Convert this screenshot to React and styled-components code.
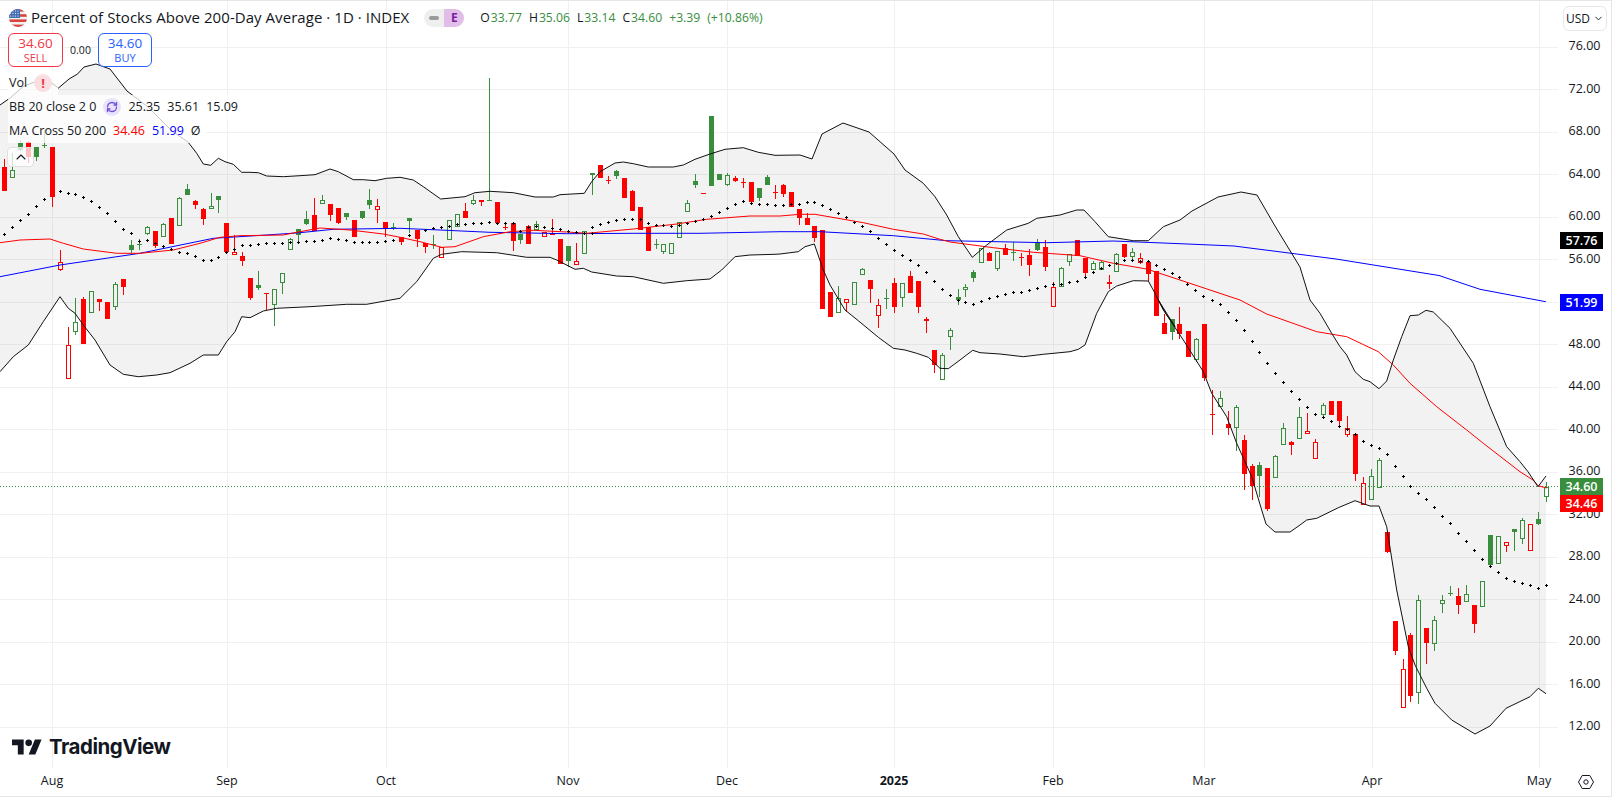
import React from 'react'
import styled, { createGlobalStyle } from 'styled-components'
import { ChevronDown, ChevronUp, RefreshCw } from 'lucide-react'

const UI_FONT = `"Open Sans", "Noto Sans", Roboto, sans-serif`
const GREEN = '#388e3c'
const RED = '#ff0000'
const BLUE = '#0000ff'
const INK = '#131722'
const GRID = '#f0f0f0'

// pixel values were read off crops, so each block carries the crop origin
const crop = (x0, y0, scale = 3) => (rows) =>
  rows.map(([x, ...rest]) => [
    x0 + x / scale,
    ...rest.map((v) => (typeof v === 'number' ? y0 + v / scale : v)),
  ])

// [x, kind, wickTop, bodyTop, bodyBottom, wickBottom]
// G / R filled, g / r hollow
const candles = [
  ...crop(0, 130)([
    [13, 'R', 88, 110, 183, 183], [37, 'g', 70, 120, 140, 140], [61, 'G', 30, 38, 60, 62],
    [85, 'R', 33, 35, 80, 100], [109, 'G', 50, 50, 80, 92], [133, 'G', 0, 45, 47, 55],
    [157, 'R', 52, 52, 200, 230], [181, 'r', 360, 395, 418, 422], [205, 'r', 590, 645, 745, 745],
    [226, 'g', 505, 577, 602, 614], [250, 'R', 500, 507, 641, 641], [274, 'g', 484, 484, 545, 545],
    [298, 'R', 507, 507, 515, 542], [322, 'R', 516, 516, 567, 567], [346, 'g', 456, 463, 527, 540],
    [370, 'R', 447, 447, 471, 495], [394, 'G', 330, 345, 360, 370], [418, 'G', 328, 342, 346, 360],
    [442, 'g', 288, 290, 308, 314], [466, 'R', 303, 303, 347, 355], [490, 'g', 280, 283, 317, 320],
    [514, 'R', 264, 264, 342, 342], [538, 'g', 202, 205, 286, 286], [562, 'G', 162, 178, 194, 194],
    [586, 'R', 211, 213, 225, 236], [610, 'R', 234, 238, 266, 285], [634, 'g', 190, 229, 235, 235],
    [655, 'G', 198, 198, 209, 250], [679, 'R', 279, 279, 365, 370], [703, 'r', 316, 367, 373, 373],
    [727, 'R', 365, 378, 392, 407], [751, 'R', 445, 445, 503, 510], [775, 'G', 423, 465, 473, 480],
    [799, 'R', 490, 490, 492, 541], [823, 'g', 478, 478, 523, 587], [847, 'g', 430, 430, 457, 491],
    [871, 'g', 325, 328, 358, 358], [895, 'G', 297, 298, 314, 337], [919, 'G', 243, 268, 282, 285],
    [943, 'R', 204, 256, 302, 302], [967, 'g', 196, 211, 220, 220], [991, 'R', 223, 223, 254, 272],
    [1015, 'R', 235, 235, 278, 281], [1039, 'G', 250, 250, 261, 269], [1063, 'R', 270, 270, 321, 321],
    [1087, 'G', 244, 244, 263, 268], [1108, 'G', 178, 211, 224, 236], [1132, 'r', 208, 229, 238, 278],
    [1156, 'R', 277, 277, 296, 322], [1180, 'G', 278, 290, 292, 300],
  ]),
  ...crop(400, 70)([
    [4, 'R', 500, 500, 516, 525], [28, 'G', 445, 445, 452, 490], [52, 'R', 480, 480, 507, 530],
    [76, 'R', 520, 520, 530, 548], [100, 'G', 496, 523, 525, 536], [124, 'r', 530, 530, 560, 560],
    [148, 'g', 451, 451, 508, 508], [172, 'g', 433, 433, 468, 468], [196, 'R', 400, 423, 443, 443],
    [220, 'g', 375, 390, 400, 404], [244, 'R', 391, 391, 395, 408], [268, 'G', 25, 390, 392, 392],
    [292, 'R', 396, 396, 459, 459], [316, 'R', 460, 470, 473, 480], [340, 'R', 458, 460, 513, 543],
    [361, 'G', 492, 492, 510, 522], [385, 'R', 466, 468, 522, 522], [409, 'g', 452, 461, 476, 476],
    [433, 'r', 487, 487, 499, 499], [457, 'R', 447, 490, 494, 494], [481, 'R', 507, 507, 581, 581],
    [505, 'G', 528, 528, 573, 590], [529, 'r', 519, 574, 581, 581], [553, 'g', 482, 484, 548, 548],
    [577, 'G', 310, 310, 314, 375], [601, 'R', 285, 285, 324, 324], [625, 'R', 318, 329, 332, 343],
    [649, 'G', 300, 303, 318, 327], [673, 'R', 324, 324, 383, 383], [697, 'R', 361, 363, 422, 422],
    [721, 'R', 411, 411, 480, 480], [745, 'R', 472, 472, 543, 543], [769, 'G', 507, 523, 526, 537],
    [790, 'g', 523, 523, 544, 552], [814, 'g', 520, 520, 548, 548], [838, 'g', 457, 457, 500, 500],
    [862, 'g', 391, 400, 422, 422], [886, 'G', 312, 333, 345, 353], [910, 'R', 369, 369, 371, 371],
    [934, 'G', 138, 138, 347, 347], [958, 'G', 312, 312, 330, 330], [982, 'g', 310, 316, 341, 347],
    [1006, 'R', 318, 323, 333, 335], [1030, 'R', 325, 335, 338, 353], [1054, 'R', 336, 336, 395, 395],
    [1078, 'G', 354, 354, 384, 393], [1102, 'G', 315, 321, 345, 345], [1126, 'R', 346, 366, 369, 386],
    [1150, 'R', 343, 345, 372, 380], [1174, 'R', 366, 366, 410, 410], [1198, 'R', 418, 418, 443, 465],
  ]),
  ...crop(780, 170)([
    [82, 'R', 130, 145, 165, 165], [103, 'R', 168, 168, 203, 215], [127, 'R', 180, 180, 417, 417],
    [151, 'R', 366, 366, 441, 441], [175, 'g', 348, 384, 425, 425], [199, 'r', 388, 388, 395, 425],
    [223, 'g', 337, 337, 401, 401], [247, 'g', 295, 298, 311, 314], [271, 'R', 330, 330, 357, 398],
    [295, 'r', 387, 406, 434, 473], [319, 'G', 357, 384, 387, 417], [343, 'R', 324, 339, 411, 429],
    [367, 'g', 340, 340, 380, 410], [391, 'R', 303, 318, 369, 369], [415, 'R', 333, 333, 411, 429],
    [439, 'R', 441, 448, 452, 489], [463, 'R', 541, 541, 586, 608], [487, 'g', 550, 556, 628, 628],
    [511, 'g', 475, 481, 499, 540], [535, 'G', 358, 381, 389, 404], [556, 'g', 342, 352, 358, 381],
    [580, 'G', 300, 306, 324, 336], [604, 'g', 235, 235, 275, 275], [628, 'R', 247, 250, 273, 273],
    [652, 'g', 244, 244, 293, 303], [676, 'R', 222, 235, 254, 254], [700, 'G', 216, 245, 248, 272],
    [724, 'R', 250, 260, 262, 288], [748, 'R', 238, 256, 285, 318], [772, 'G', 208, 220, 240, 242],
    [796, 'R', 210, 231, 291, 303], [820, 'r', 335, 352, 409, 409], [844, 'g', 292, 295, 347, 347],
    [868, 'g', 253, 253, 272, 288], [892, 'R', 210, 210, 258, 258], [916, 'R', 263, 263, 308, 325],
    [940, 'g', 274, 280, 296, 298], [964, 'g', 272, 277, 296, 300], [988, 'R', 316, 337, 341, 357],
    [1009, 'g', 250, 253, 302, 302], [1033, 'R', 222, 222, 261, 265], [1057, 'g', 235, 245, 257, 266],
    [1081, 'r', 250, 265, 275, 283], [1105, 'R', 276, 276, 311, 334], [1129, 'R', 304, 304, 437, 437],
    [1153, 'R', 432, 460, 491, 491], [1177, 'G', 448, 448, 485, 510], [1198, 'R', 412, 463, 491, 506],
  ]),
  ...crop(1150, 300)([
    [115, 'R', 93, 93, 170, 170], [139, 'g', 114, 118, 176, 185], [163, 'R', 72, 72, 233, 242],
    [187, 'R', 270, 342, 344, 404], [211, 'g', 273, 295, 317, 322], [235, 'R', 334, 373, 384, 404],
    [259, 'g', 315, 322, 382, 452], [283, 'R', 405, 421, 521, 570], [307, 'R', 492, 498, 557, 600],
    [328, 'G', 487, 496, 527, 590], [352, 'R', 505, 505, 628, 632], [376, 'g', 465, 469, 532, 532],
    [400, 'g', 369, 385, 431, 435], [424, 'R', 424, 427, 434, 465], [448, 'g', 321, 352, 415, 415],
    [472, 'r', 339, 394, 400, 400], [496, 'r', 418, 427, 475, 475], [520, 'g', 310, 316, 343, 350],
    [544, 'R', 303, 303, 344, 344], [568, 'R', 303, 303, 362, 377], [592, 'r', 349, 385, 403, 410],
    [616, 'R', 403, 403, 521, 542], [640, 'r', 531, 550, 613, 613], [664, 'g', 508, 529, 596, 596],
    [688, 'g', 475, 481, 562, 565],
  ]),
  ...crop(1300, 490)([
    [262, 'R', 126, 126, 185, 188], [286, 'R', 393, 393, 482, 495], [310, 'r', 508, 538, 650, 650],
    [331, 'R', 430, 435, 617, 635], [355, 'g', 315, 331, 607, 643], [379, 'R', 414, 414, 458, 521],
    [403, 'g', 378, 391, 458, 482], [427, 'g', 315, 331, 340, 368], [451, 'G', 288, 309, 312, 318],
    [475, 'R', 294, 319, 344, 371], [499, 'g', 285, 313, 334, 334], [523, 'R', 345, 345, 401, 428],
    [547, 'g', 274, 274, 347, 347], [571, 'G', 135, 135, 224, 234], [595, 'g', 139, 139, 220, 220],
    [619, 'r', 157, 157, 166, 185], [643, 'G', 118, 118, 125, 182],
  ]),
  ...crop(1490, 500)([
    [97, 'g', 54, 61, 115, 131], [121, 'r', 73, 73, 151, 151], [145, 'G', 36, 58, 71, 75],
  ]),
  ...crop(1400, 420)([[439, 'g', 187, 201, 227, 245]]),
]

const basis = [
  ...crop(0, 130)([
    [13, 313], [37, 292], [61, 271], [85, 253], [109, 229], [133, 208], [181, 184], [205, 189], [226, 193],
    [250, 203], [274, 214], [298, 232], [322, 250], [346, 274], [370, 298], [394, 310], [418, 334], [442, 331],
    [466, 340], [490, 349], [514, 358], [538, 367], [562, 371], [586, 379], [610, 391], [634, 391], [655, 382],
    [679, 367], [703, 358], [727, 347], [751, 346], [775, 343], [799, 341], [823, 340], [847, 340], [871, 337],
    [895, 338], [919, 334], [943, 334], [967, 331], [991, 325], [1015, 329], [1039, 332], [1063, 337], [1087, 337],
    [1108, 337], [1132, 337], [1156, 334], [1180, 331],
  ]),
  ...crop(400, 70)([
    [28, 496], [76, 481], [100, 475], [124, 472], [148, 469], [172, 463], [196, 463], [220, 460], [244, 460],
    [268, 457], [292, 460], [316, 460], [340, 460], [361, 484], [385, 472], [409, 469], [433, 472], [457, 475],
    [481, 478], [505, 484], [529, 487], [553, 491], [577, 490], [577, 472], [601, 463], [625, 457], [649, 451],
    [673, 448], [697, 448], [721, 448], [745, 460], [769, 466], [790, 466], [814, 469], [838, 466], [862, 460],
    [886, 454], [910, 448], [934, 439], [958, 427], [982, 415], [1006, 403], [1030, 394], [1054, 400], [1078, 403],
    [1102, 403], [1126, 406], [1150, 406], [1174, 403],
  ]),
  ...crop(780, 170)([
    [58, 103], [82, 97], [103, 97], [127, 106], [151, 118], [175, 130], [199, 142], [223, 157], [247, 169],
    [271, 184], [295, 205], [319, 223], [343, 241], [367, 256], [391, 271], [415, 286], [439, 307], [463, 334],
    [487, 358], [511, 376], [535, 391], [556, 397], [580, 403], [604, 394], [628, 385], [652, 379], [676, 373],
    [700, 367], [724, 367], [748, 361], [772, 355], [796, 349], [820, 343], [844, 343], [868, 337], [892, 334],
    [916, 322], [940, 307], [964, 295], [988, 286], [1009, 280], [1033, 271], [1057, 271], [1081, 273], [1105, 274],
    [1129, 286], [1153, 298], [1177, 310], [1198, 322],
  ]),
  [1187.3, 284], [1195.3, 290], [1203.3, 296], [1212.3, 300],
  ...crop(1150, 300)([
    [211, 13], [235, 37], [259, 61], [283, 91], [307, 124], [328, 157], [352, 190], [376, 220], [400, 247],
    [424, 274], [448, 298], [472, 322], [496, 343], [520, 352], [544, 364], [568, 379], [592, 388], [616, 403],
    [640, 424], [664, 436], [688, 445], [712, 463], [736, 499], [760, 529], [781, 559],
  ]),
  ...crop(1300, 490)([
    [355, 10], [379, 28], [403, 52], [427, 79], [451, 100], [475, 130], [499, 154], [523, 181], [547, 208],
    [571, 229], [595, 247], [619, 265], [643, 274],
  ]),
  ...crop(1490, 500)([[97, 250], [121, 257], [145, 265], [169, 257]]),
]

const upperBand = [
  [0, 105], [10, 98], [24, 86], [45, 78], [58.5, 88], [69, 79], [77.5, 74], [84, 67], [96, 64], [110, 69],
  [127, 91], [148, 107], [172, 131], [188, 142],
  ...crop(0, 130)([
    [590, 70], [610, 102], [632, 106], [655, 85], [675, 95], [700, 103], [725, 127], [750, 127], [775, 128],
    [800, 138], [850, 140], [900, 137], [945, 134], [990, 117], [1015, 125], [1060, 149], [1090, 149], [1125, 152],
    [1160, 145],
  ]),
  ...crop(400, 70)([
    [0, 322], [40, 330], [70, 350], [122, 387], [195, 380], [225, 368], [270, 364], [340, 368], [405, 381],
    [460, 381], [480, 374], [553, 370], [575, 335], [600, 305], [645, 279], [670, 276], [700, 281], [745, 291],
    [820, 291], [850, 285], [885, 268], [930, 252], [975, 238], [1030, 233], [1075, 247], [1125, 256], [1200, 255],
  ]),
  [812, 159], [822, 134], [843, 123], [869, 132], [894, 154], [905, 170],
  ...crop(780, 170)([
    [430, 40], [465, 80], [500, 135], [535, 200], [577, 262], [620, 225], [680, 180], [745, 160], [770, 145],
    [840, 135], [890, 120], [912, 120], [945, 155], [985, 200], [1060, 212], [1105, 212], [1150, 170], [1200, 150],
  ]),
  [1192, 211], [1218, 197], [1241, 192], [1257, 195], [1275, 226], [1300, 267],
  ...crop(1150, 300)([
    [480, 0], [510, 40], [545, 100], [570, 140], [590, 165], [615, 215], [640, 238], [660, 245], [687, 266],
    [710, 243], [730, 180], [755, 110], [780, 47], [805, 45], [828, 31], [850, 36], [900, 85], [970, 190],
    [1020, 320], [1070, 440], [1110, 485],
  ]),
  [1528, 471.7], [1538, 486.7], [1546, 476],
]

const lowerBand = [
  ...crop(0, 130)([
    [0, 725], [40, 680], [85, 645], [130, 575], [180, 500], [205, 535], [225, 550], [250, 585], [285, 630],
    [330, 705], [370, 733], [415, 740], [470, 735], [510, 728], [570, 700], [610, 675], [655, 675], [680, 635],
    [705, 605], [725, 560], [750, 563], [790, 543], [830, 535], [930, 530], [1040, 523], [1100, 523],
  ]),
  ...crop(400, 70)([
    [0, 685], [50, 635], [100, 565], [125, 553], [185, 545], [290, 548], [380, 562], [450, 562], [470, 570],
    [525, 598], [550, 595], [575, 606], [650, 618], [700, 620], [790, 640], [860, 632], [930, 627], [965, 600],
    [1005, 560], [1050, 555], [1125, 553],
  ]),
  ...crop(780, 170)([
    [0, 252], [55, 245], [75, 230], [103, 222], [130, 300], [150, 345], [195, 420], [235, 452], [295, 502],
    [340, 535], [375, 540], [410, 550], [445, 562], [480, 595], [505, 596], [540, 570], [578, 541], [600, 548],
    [660, 552], [730, 560], [790, 553], [870, 545], [895, 538], [915, 525], [950, 430], [985, 365], [1010, 348],
    [1060, 332], [1105, 333], [1125, 370], [1150, 420], [1185, 470],
  ]),
  ...crop(1150, 300)([[25, 0], [50, 45], [100, 120], [160, 215], [185, 280], [230, 350], [260, 430], [305, 530], [335, 630]]),
  [1266, 524], [1275, 532], [1290, 532],
  ...crop(1300, 490)([
    [0, 105], [20, 90], [50, 85], [115, 53], [165, 32], [210, 48], [237, 48], [260, 110], [290, 300], [325, 470],
    [345, 525], [380, 595], [405, 640], [455, 690],
  ]),
  [1475, 734], [1490, 726],
  ...crop(1490, 500)([[48, 625], [120, 590], [145, 565], [168, 581]]),
]

const ma50 = [
  ...crop(0, 130)([
    [0, 338], [60, 330], [150, 327], [190, 340], [250, 357], [350, 370], [420, 370], [520, 360], [600, 340],
    [660, 322], [720, 317], [850, 315], [900, 305], [960, 294], [1050, 300], [1150, 312],
  ]),
  ...crop(400, 70)([
    [0, 502], [60, 515], [125, 532], [165, 530], [250, 500], [330, 485], [400, 481], [500, 486], [560, 490],
    [700, 477], [830, 462], [920, 448], [1050, 438],
  ]),
  ...crop(780, 170)([
    [0, 138], [60, 133], [105, 133], [250, 158], [340, 178], [430, 192], [480, 208], [510, 216], [640, 233],
    [760, 247], [900, 257], [1000, 280], [1100, 297], [1200, 330],
  ]),
  ...crop(1150, 300)([
    [270, 0], [350, 42], [500, 95], [590, 110], [685, 155], [730, 195], [780, 250], [860, 320], [950, 390],
    [1000, 430], [1110, 515],
  ]),
  [1533, 480], [1538, 485.7], [1546.7, 488],
]

const ma200 = [
  ...crop(0, 130)([[0, 440], [180, 405], [420, 370], [640, 325], [800, 315], [900, 308], [1000, 298]]),
  ...crop(400, 70)([[0, 475], [120, 480], [270, 487], [500, 491], [700, 490], [900, 490]]),
  ...crop(780, 170)([[0, 185], [120, 185], [340, 197], [500, 212], [800, 218], [1000, 213], [1200, 221]]),
  [1234, 246], [1336, 259], [1439, 275.5],
  ...crop(1480, 225)([[0, 193], [197, 230]]),
  [1546, 302],
]

const priceTicks = [76, 72, 68, 64, 60, 56, 52, 48, 44, 40, 36, 32, 28, 24, 20, 16, 12]
const priceY = (p) => 46.7 + (76 - p) * 10.625
const monthLines = [52, 227, 386, 568, 727, 894, 1053, 1204, 1372, 1539]
const timeTicks = [
  { x: 52, label: 'Aug' },
  { x: 227, label: 'Sep' },
  { x: 386, label: 'Oct' },
  { x: 568, label: 'Nov' },
  { x: 727, label: 'Dec' },
  { x: 894, label: '2025', bold: true },
  { x: 1053, label: 'Feb' },
  { x: 1204, label: 'Mar' },
  { x: 1372, label: 'Apr' },
  { x: 1539, label: 'May' },
]
const priceTags = [
  { y: 232.3, label: '57.76', bg: '#000000' },
  { y: 294, label: '51.99', bg: BLUE },
  { y: 477.7, label: '34.60', bg: GREEN },
  { y: 495, label: '34.46', bg: RED },
]

const points = (rows) => rows.map(([x, y]) => `${x.toFixed(1)},${y.toFixed(1)}`).join(' ')

const GlobalStyle = createGlobalStyle`
  html, body, #root {
    margin: 0;
    padding: 0;
    height: 100%;
    background: #ffffff;
  }
  body {
    font-family: ${UI_FONT};
    color: ${INK};
    overflow: hidden;
  }
`

const Page = styled('div')`
  width: 1612px;
  height: 797px;
  display: flex;
  flex-direction: column;
  box-sizing: border-box;
  border-top: 1px solid #e6e6e6;
  border-right: 1px solid #e6e6e6;
  border-bottom: 1px solid #e6e6e6;
`
const ChartRow = styled('div')`
  display: flex;
  height: 767px;
`
const Pane = styled('div')`
  position: relative;
  width: 1558px;
  height: 767px;
  overflow: hidden;
`
const ChartSvg = styled('svg')`
  display: block;
`
const LegendOverlay = styled('div')`
  position: absolute;
  top: 7px;
  left: 8px;
  display: flex;
  flex-direction: column;
  align-items: flex-start;
`
const TitleRow = styled('div')`
  display: flex;
  align-items: center;
  height: 19px;
  margin-left: 1px;
`
const FlagMark = styled('svg')`
  flex: none;
  margin-right: 4px;
`
const Title = styled('span')`
  font-size: 15px;
  letter-spacing: 0.05px;
  white-space: nowrap;
  line-height: 19px;
`
const StatusPill = styled('div')`
  display: flex;
  align-items: center;
  width: 40px;
  height: 18px;
  margin-left: 15px;
  border-radius: 9px;
  overflow: hidden;
  background: #efefef;
`
const PillDash = styled('span')`
  flex: 1;
  display: flex;
  justify-content: center;
  &::before {
    content: '';
    width: 10px;
    height: 4px;
    border-radius: 2px;
    background: #9b9b9b;
  }
`
const PillEarnings = styled('span')`
  width: 20px;
  height: 18px;
  text-align: center;
  font-size: 12px;
  font-weight: 700;
  line-height: 18px;
  color: #7b1fa2;
  background: #e1bee7;
`
const Ohlc = styled('div')`
  display: flex;
  gap: 7px;
  margin-left: 16px;
  font-size: 12.2px;
  line-height: 19px;
  white-space: nowrap;
`
const OhlcItem = styled('span')`
  color: ${GREEN};
  & > b {
    font-weight: 400;
    color: ${INK};
    margin-right: 1px;
  }
`
const TradeRow = styled('div')`
  display: flex;
  align-items: center;
  margin-top: 6px;
`
const TradeButton = styled('div')`
  box-sizing: border-box;
  width: ${(p) => p.$w}px;
  height: 34px;
  display: flex;
  flex-direction: column;
  align-items: center;
  justify-content: center;
  border: 1px solid ${(p) => p.$color};
  border-radius: 6px;
  background: #ffffff;
  color: ${(p) => p.$color};
  font-size: 13.5px;
  line-height: 15px;
  & > small {
    font-size: 11px;
    line-height: 14px;
  }
`
const Spread = styled('span')`
  width: 35px;
  text-align: center;
  font-size: 10.5px;
`
const StudyRow = styled('div')`
  display: flex;
  align-items: center;
  gap: 7px;
  height: 24px;
  padding-left: 1px;
  padding-right: 6px;
  font-size: 12.5px;
  line-height: 24px;
  white-space: nowrap;
  background: rgba(255, 255, 255, 0.75);
`
const VolRow = styled(StudyRow)`
  margin-top: 4px;
`
const StudyValues = styled('span')`
  display: flex;
  gap: 7px;
`
const StudyValue = styled('span')`
  color: ${(p) => p.$color || INK};
`
const Badge = styled('span')`
  width: 18px;
  height: 18px;
  border-radius: 50%;
  display: flex;
  align-items: center;
  justify-content: center;
  background: ${(p) => p.$bg};
  color: ${(p) => p.$color};
  font-size: 13px;
  font-weight: 700;
`
const CollapseButton = styled('div')`
  box-sizing: border-box;
  width: 27px;
  height: 20px;
  margin-top: 4px;
  margin-left: -1px;
  display: flex;
  align-items: center;
  justify-content: center;
  border: 1px solid #e0e0e0;
  border-radius: 4px;
  background: rgba(255, 255, 255, 0.75);
`
const Logo = styled('div')`
  position: absolute;
  left: 12px;
  top: 733px;
  display: flex;
  align-items: center;
  gap: 7px;
`
const LogoWord = styled('span')`
  font-family: Inter, "Open Sans", sans-serif;
  font-size: 20.5px;
  font-weight: 700;
  letter-spacing: -0.5px;
  line-height: 26px;
  color: ${INK};
`
const PriceScale = styled('div')`
  position: relative;
  width: 53px;
  height: 767px;
`
const TickList = styled('div')`
  display: flex;
  flex-direction: column;
  padding-top: 24.45px;
`
const Tick = styled('div')`
  height: 42.5px;
  line-height: 42.5px;
  text-align: center;
  font-size: 12.5px;
`
const CurrencyButton = styled('div')`
  position: absolute;
  top: 5px;
  left: 5px;
  box-sizing: border-box;
  width: 44px;
  height: 25px;
  display: flex;
  align-items: center;
  justify-content: center;
  gap: 3px;
  border: 1px solid #e6e6e6;
  border-radius: 6px;
  background: #ffffff;
  font-size: 12px;
`
const PriceTag = styled('div')`
  position: absolute;
  left: 2px;
  width: 43px;
  height: 17px;
  text-align: center;
  font-size: 12.5px;
  font-weight: 600;
  line-height: 17px;
  color: #ffffff;
`
const TimeAxis = styled('div')`
  position: relative;
  height: 28px;
`
const TimeTick = styled('span')`
  position: absolute;
  top: 4px;
  transform: translateX(-50%);
  font-size: 12.5px;
  font-weight: ${(p) => (p.$bold ? 700 : 400)};
  line-height: 18px;
`
const GearButton = styled('svg')`
  position: absolute;
  left: 1577px;
  top: 5px;
`

const UsFlag = () => (
  <FlagMark width="18" height="18" viewBox="0 0 18 18">
    <defs>
      <clipPath id="flag-clip">
        <circle cx="9" cy="9" r="9" />
      </clipPath>
    </defs>
    <g clipPath="url(#flag-clip)">
      <rect width="18" height="18" fill="#f0f0f0" />
      <rect y="0" width="18" height="2.6" fill="#d9443f" />
      <rect y="5.2" width="18" height="2.6" fill="#d9443f" />
      <rect y="10.4" width="18" height="2.6" fill="#d9443f" />
      <rect y="15.6" width="18" height="2.6" fill="#d9443f" />
      <rect width="11" height="9" fill="#3f6fb5" />
      {[1.5, 4, 6.5, 9].flatMap((x) =>
        [2, 4.5, 7].map((y) => <circle key={`${x}-${y}`} cx={x} cy={y} r="0.6" fill="#ffffff" />),
      )}
    </g>
  </FlagMark>
)

const Candle = ({ row }) => {
  const [x, kind, wickTop, bodyTop, bodyBottom, wickBottom] = row
  const color = kind === 'G' || kind === 'g' ? GREEN : RED
  const hollow = kind === 'g' || kind === 'r'
  const cx = Math.floor(x)
  const top = Math.round(bodyTop)
  const height = Math.max(Math.round(bodyBottom) - top, 1)
  return (
    <g shapeRendering="crispEdges">
      {wickTop < bodyTop && (
        <rect x={cx} y={Math.round(wickTop)} width="1" height={top - Math.round(wickTop)} fill={color} />
      )}
      {wickBottom > bodyBottom && (
        <rect x={cx} y={top + height} width="1" height={Math.round(wickBottom) - top - height} fill={color} />
      )}
      {hollow ? (
        <rect x={cx - 1.5} y={top + 0.5} width="4" height={height} fill="none" stroke={color} />
      ) : (
        <rect x={cx - 2} y={top} width="5" height={height} fill={color} />
      )}
    </g>
  )
}

const Chart = () => (
  <ChartSvg width="1558" height="767" viewBox="0 1 1558 767">
    <g stroke={GRID} shapeRendering="crispEdges">
      {priceTicks.map((p) => (
        <line key={p} x1="0" x2="1558" y1={Math.round(priceY(p)) + 0.5} y2={Math.round(priceY(p)) + 0.5} />
      ))}
      {monthLines.map((x) => (
        <line key={x} x1={x + 0.5} x2={x + 0.5} y1="0" y2="768" />
      ))}
    </g>
    <polygon points={points([...upperBand, ...[...lowerBand].reverse()])} fill="#808080" fillOpacity="0.1" />
    {candles.map((row, i) => (
      <Candle key={i} row={row} />
    ))}
    <line
      x1="0"
      x2="1558"
      y1="486.5"
      y2="486.5"
      stroke={GREEN}
      strokeDasharray="1 2"
      shapeRendering="crispEdges"
    />
    <polyline points={points(ma200)} fill="none" stroke={BLUE} strokeLinejoin="round" />
    <polyline points={points(ma50)} fill="none" stroke={RED} strokeLinejoin="round" />
    <polyline points={points(upperBand)} fill="none" stroke="#111111" strokeLinejoin="round" />
    <polyline points={points(lowerBand)} fill="none" stroke="#111111" strokeLinejoin="round" />
    <g fill="#000000" shapeRendering="crispEdges">
      {basis.map(([x, y], i) => (
        <path
          key={i}
          d={`M${Math.floor(x) - 1} ${Math.floor(y)}h3v1h-3zM${Math.floor(x)} ${Math.floor(y) - 1}h1v3h-1z`}
        />
      ))}
    </g>
  </ChartSvg>
)

const Legend = () => (
  <LegendOverlay>
    <TitleRow>
      <UsFlag />
      <Title>Percent of Stocks Above 200-Day Average · 1D · INDEX</Title>
      <StatusPill>
        <PillDash />
        <PillEarnings>E</PillEarnings>
      </StatusPill>
      <Ohlc>
        <OhlcItem><b>O</b>33.77</OhlcItem>
        <OhlcItem><b>H</b>35.06</OhlcItem>
        <OhlcItem><b>L</b>33.14</OhlcItem>
        <OhlcItem><b>C</b>34.60</OhlcItem>
        <OhlcItem>+3.39</OhlcItem>
        <OhlcItem>(+10.86%)</OhlcItem>
      </Ohlc>
    </TitleRow>
    <TradeRow>
      <TradeButton $w={55} $color="#f23645">
        34.60
        <small>SELL</small>
      </TradeButton>
      <Spread>0.00</Spread>
      <TradeButton $w={54} $color="#2962ff">
        34.60
        <small>BUY</small>
      </TradeButton>
    </TradeRow>
    <VolRow>
      Vol
      <Badge $bg="#f9dfe1" $color="#f23645">!</Badge>
    </VolRow>
    <StudyRow>
      BB 20 close 2 0
      <Badge $bg="#e8e3fb" $color="#6f4fd8">
        <RefreshCw size={12} strokeWidth={2.6} />
      </Badge>
      <StudyValues>
        <StudyValue>25.35</StudyValue>
        <StudyValue>35.61</StudyValue>
        <StudyValue>15.09</StudyValue>
      </StudyValues>
    </StudyRow>
    <StudyRow>
      MA Cross 50 200
      <StudyValues>
        <StudyValue $color={RED}>34.46</StudyValue>
        <StudyValue $color={BLUE}>51.99</StudyValue>
        <StudyValue>Ø</StudyValue>
      </StudyValues>
    </StudyRow>
    <CollapseButton>
      <ChevronUp size={16} strokeWidth={1.6} color={INK} />
    </CollapseButton>
  </LegendOverlay>
)

const App = () => (
  <>
    <GlobalStyle />
    <Page>
      <ChartRow>
        <Pane>
          <Chart />
          <Legend />
          <Logo>
            <svg width="30" height="16" viewBox="0 4 36 18">
              <path d="M14 22H7V11H0V4h14v18zM28 22h-8l7.5-18h8L28 22z" fill={INK} />
              <circle cx="20" cy="8" r="4" fill={INK} />
            </svg>
            <LogoWord>TradingView</LogoWord>
          </Logo>
        </Pane>
        <PriceScale>
          <TickList>
            {priceTicks.map((p) => (
              <Tick key={p}>{p.toFixed(2)}</Tick>
            ))}
          </TickList>
          <CurrencyButton>
            USD
            <ChevronDown size={11} strokeWidth={2} />
          </CurrencyButton>
          {priceTags.map((t) => (
            <PriceTag key={t.label} style={{ top: t.y - 1, background: t.bg }}>
              {t.label}
            </PriceTag>
          ))}
        </PriceScale>
      </ChartRow>
      <TimeAxis>
        {timeTicks.map((t) => (
          <TimeTick key={t.label} $bold={t.bold} style={{ left: t.x }}>
            {t.label}
          </TimeTick>
        ))}
        <GearButton width="18" height="18" viewBox="0 0 18 18" fill="none" stroke={INK} strokeWidth="1">
          <path d="M5.2 2.5h7.6L16.5 9l-3.7 6.5H5.2L1.5 9z" strokeLinejoin="round" />
          <circle cx="9" cy="9" r="2.2" />
        </GearButton>
      </TimeAxis>
    </Page>
  </>
)

export default App
